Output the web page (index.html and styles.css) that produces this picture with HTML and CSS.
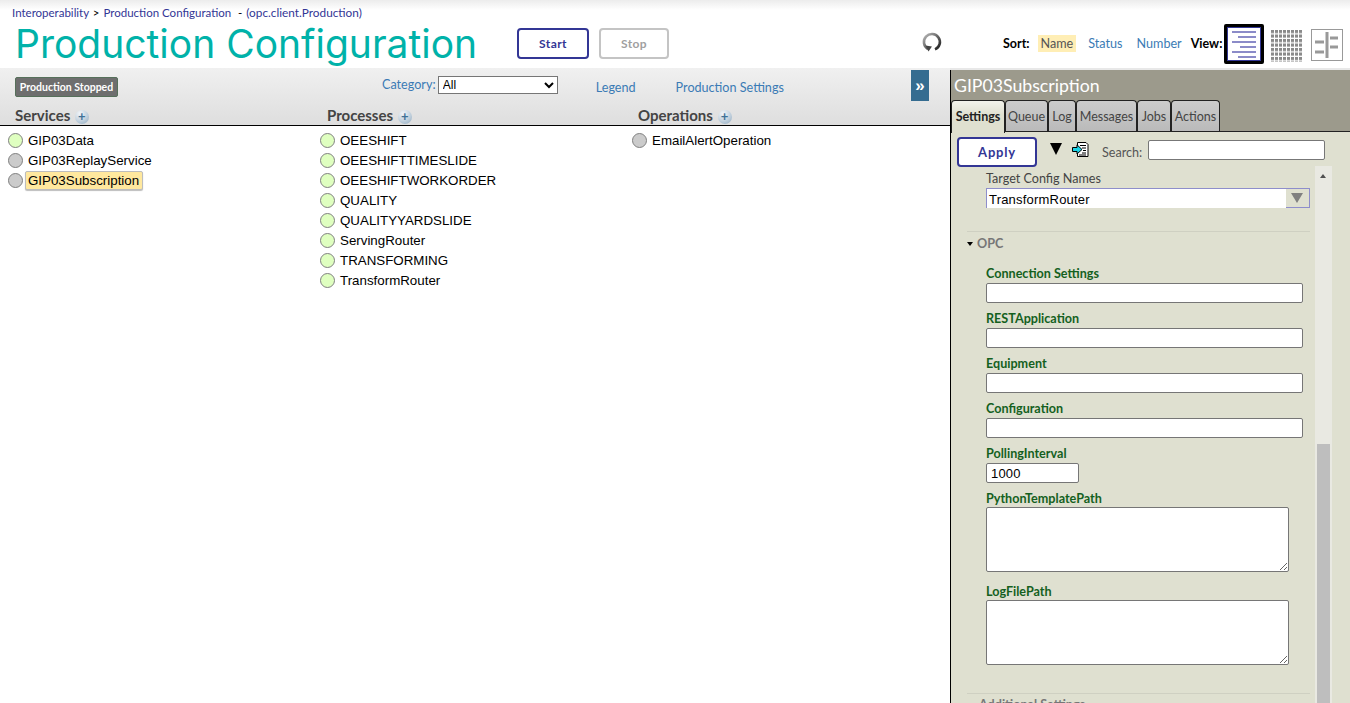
FILE: index.html
```html
<!DOCTYPE html>
<html>
<head>
  <meta charset="utf-8">
  <title>Production Configuration</title>
  <link rel="stylesheet" href="styles.css">
</head>
<body>
  <header class="top">
    <div class="title-block">
      <div class="crumbs"><a>Interoperability</a> <b>&gt;</b> <a>Production Configuration</a> &nbsp;<b>-</b> <a class="crumb-ns">(opc.client.Production)</a></div>
      <h1>Production Configuration</h1>
    </div>
    <div class="run-buttons">
      <button class="btn">Start</button>
      <button class="btn btn-off">Stop</button>
    </div>
    <svg class="refresh" width="22" height="22" viewBox="0 0 22 22">
      <defs>
        <linearGradient id="ring" x1="0" y1="0" x2="1" y2="1">
          <stop offset="0" stop-color="#bbb"/>
          <stop offset="0.5" stop-color="#666"/>
          <stop offset="1" stop-color="#1c1c1c"/>
        </linearGradient>
      </defs>
      <path d="M7 18 A8 8 0 1 1 14 18.400" fill="none" stroke="url(#ring)" stroke-width="2.600"/>
      <path d="M4.500 14.500 L11 15.500 L7.500 20.500 Z" fill="#444"/>
    </svg>
    <div class="sort">
      <span class="sort-label">Sort:</span>
      <a class="sort-on">Name</a>
      <a>Status</a>
      <a>Number</a>
      <span class="sort-label view-label">View:</span>
    </div>
    <div class="views">
      <div class="view view-on">
        <svg width="34" height="34" viewBox="0 0 34 34" stroke="#8b8bc8" stroke-width="2">
          <path d="M5 5H29M11 10H29M5 15H29M13 20H29M5 25H29M11 30H29"/>
        </svg>
      </div>
      <svg class="view-grid" width="32" height="32" viewBox="0 0 32 32">
        <defs>
          <pattern id="dots" width="4" height="4.500" patternUnits="userSpaceOnUse">
            <rect width="3" height="3.200" fill="#8a8a8a"/>
          </pattern>
        </defs>
        <rect width="32" height="32" fill="url(#dots)"/>
      </svg>
      <svg class="view-tree" width="32" height="32" viewBox="0 0 32 32">
        <rect x="0.500" y="0.500" width="31" height="31" fill="#fff" stroke="#999"/>
        <path d="M16 3V29" stroke="#999" stroke-width="3"/>
        <path d="M4 13H13M4 23H13M19 9H27M19 18H27" stroke="#999" stroke-width="3"/>
      </svg>
    </div>
  </header>

  <main class="main">
    <section class="diagram">
      <div class="band">
        <div class="band-tools">
          <span class="status-badge">Production Stopped</span>
          <label class="category">Category:
            <select><option>All</option></select>
          </label>
          <a class="legend">Legend</a>
          <a class="prod-settings">Production Settings</a>
          <button class="collapse">»</button>
        </div>
        <div class="col-heads">
          <div class="col-head">Services <span class="plus">+</span></div>
          <div class="col-head">Processes <span class="plus">+</span></div>
          <div class="col-head">Operations <span class="plus">+</span></div>
        </div>
      </div>
      <div class="columns">
        <ul class="items">
          <li><i class="dot dot-green"></i><span>GIP03Data</span></li>
          <li><i class="dot"></i><span>GIP03ReplayService</span></li>
          <li><i class="dot"></i><span class="selected">GIP03Subscription</span></li>
        </ul>
        <ul class="items">
          <li><i class="dot dot-green"></i><span>OEESHIFT</span></li>
          <li><i class="dot dot-green"></i><span>OEESHIFTTIMESLIDE</span></li>
          <li><i class="dot dot-green"></i><span>OEESHIFTWORKORDER</span></li>
          <li><i class="dot dot-green"></i><span>QUALITY</span></li>
          <li><i class="dot dot-green"></i><span>QUALITYYARDSLIDE</span></li>
          <li><i class="dot dot-green"></i><span>ServingRouter</span></li>
          <li><i class="dot dot-green"></i><span>TRANSFORMING</span></li>
          <li><i class="dot dot-green"></i><span>TransformRouter</span></li>
        </ul>
        <ul class="items">
          <li><i class="dot"></i><span>EmailAlertOperation</span></li>
        </ul>
      </div>
    </section>

    <aside class="pane">
      <div class="pane-title">GIP03Subscription</div>
      <div class="tabs">
        <a class="tab tab-on">Settings</a>
        <a class="tab">Queue</a>
        <a class="tab">Log</a>
        <a class="tab">Messages</a>
        <a class="tab">Jobs</a>
        <a class="tab">Actions</a>
      </div>
      <div class="pane-body">
        <div class="apply-row">
          <button class="btn btn-apply">Apply</button>
          <span class="tri-down"></span>
          <svg class="doc-icon" width="17" height="17" viewBox="0 0 17 17">
            <path d="M5.500 1.500H14L16 3.500V15.500H5.500Z" fill="#fff" stroke="#000"/>
            <path d="M8 4.500H14M10 7H14M11 9.500H14M10 12H14M7 14H14" stroke="#000"/>
            <path d="M0.500 6.500H5V3.800L10 8.500L5 13V10.500H0.500Z" fill="#19d3e6" stroke="#000"/>
          </svg>
          <label class="search"><span>Search:</span> <input type="text"></label>
        </div>
        <div class="settings-wrap">
          <div class="settings">
            <div class="field">
              <div class="field-label plain">Target Config Names</div>
              <div class="combo"><span>TransformRouter</span><i class="combo-btn"></i></div>
            </div>
            <div class="group-head"><i class="caret"></i>OPC</div>
            <div class="field">
              <div class="field-label">Connection Settings</div>
              <input type="text" class="inp">
            </div>
            <div class="field">
              <div class="field-label">RESTApplication</div>
              <input type="text" class="inp">
            </div>
            <div class="field">
              <div class="field-label">Equipment</div>
              <input type="text" class="inp">
            </div>
            <div class="field">
              <div class="field-label">Configuration</div>
              <input type="text" class="inp">
            </div>
            <div class="field">
              <div class="field-label">PollingInterval</div>
              <input type="text" class="inp inp-short" value="1000">
            </div>
            <div class="field field-area">
              <div class="field-label">PythonTemplatePath</div>
              <textarea class="area"></textarea>
            </div>
            <div class="field field-area field-last">
              <div class="field-label">LogFilePath</div>
              <textarea class="area"></textarea>
            </div>
            <div class="group-head group-more">Additional Settings</div>
          </div>
          <div class="scrollbar">
            <span class="scroll-up"></span>
            <div class="scroll-thumb"></div>
          </div>
        </div>
      </div>
    </aside>
  </main>
</body>
</html>
```

FILE: styles.css
```css
html, body {
  margin: 0;
  padding: 0;
  height: 703px;
  overflow: hidden;
}
body {
  font-family: "Lato", "Liberation Sans", sans-serif;
  font-size: 12.6px;
  background: #fff;
}
a {
  color: #3b7bb5;
}

/* top bar */
.top {
  height: 68px;
  display: flex;
  background: linear-gradient(to bottom, #ececec, #ffffff 10px);
}
.title-block {
  width: 517px;
  padding-left: 12px;
  box-sizing: border-box;
}
.crumbs {
  margin-top: 5px;
  font-size: 11.500px;
  line-height: 15px;
  color: #333695;
  white-space: nowrap;
}
.crumbs a {
  color: #333695;
}
.crumbs b {
  font-weight: normal;
  color: #000;
  margin: 0 1px;
}
.crumbs .crumb-ns {
  font-size: 11.800px;
}
h1 {
  margin: 1px 0 0 3px;
  font-family: "Inter", sans-serif;
  font-size: 39px;
  line-height: 46px;
  font-weight: 400;
  color: #00b2a9;
  white-space: nowrap;
}
.run-buttons {
  display: flex;
  gap: 10px;
  padding-top: 28px;
  width: 153px;
  height: 31px;
}
.btn {
  font-family: inherit;
  font-size: 12px;
  font-weight: 700;
  letter-spacing: 0.4px;
  width: 72px;
  height: 31px;
  padding: 0;
  background: #fff;
  color: #333695;
  border: 2px solid #333695;
  border-radius: 4px;
}
.btn-off {
  width: 70px;
  color: #a0a0a0;
  border-color: #c4c4c4;
}
.refresh {
  margin: 31px 0 0 251px;
}
.sort {
  display: flex;
  align-items: center;
  width: 218px;
  height: 17px;
  margin: 35px 0 0 60px;
  white-space: nowrap;
}
.sort a {
  margin-right: 14px;
}
.sort-label {
  font-size: 12.500px;
  font-weight: 700;
  margin-right: 8px;
  color: #000;
}
.sort .sort-on {
  background: #ffeeb5;
  color: #555;
  padding: 0 3px;
  line-height: 17px;
  margin-right: 12px;
}
.view-label {
  margin: 0 0 0 -5px;
}
.views {
  display: flex;
  align-items: flex-start;
  gap: 7px;
  margin: 24px 0 0 3px;
}
.view {
  width: 40px;
  height: 40px;
  box-sizing: border-box;
  border: 3px solid #000;
  border-radius: 2px;
  background: #fff;
  outline: 1px solid #333695;
  outline-offset: -4px;
}
.view svg {
  display: block;
}
.view-grid {
  margin-top: 6px;
}
.view-tree {
  margin: 5px 0 0 1px;
}

/* left side */
.main {
  display: flex;
  height: 635px;
  background: #e8e8e8;
}
.diagram {
  width: 950px;
  background: #fff;
}
.band {
  height: 57px;
  border-bottom: 1px solid #000;
  background: linear-gradient(to bottom, #f0f0f0, #dedede);
}
.band-tools {
  height: 37px;
  display: flex;
  align-items: flex-start;
  padding-left: 15px;
}
.status-badge {
  margin-top: 9px;
  width: 103px;
  height: 20px;
  box-sizing: border-box;
  background: #6e6e6e;
  border: 1px solid #56705a;
  border-radius: 2px;
  color: #fff;
  font-size: 10.500px;
  font-weight: 700;
  line-height: 18px;
  text-align: center;
  white-space: nowrap;
}
.category {
  margin: 9px 0 0 264px;
  color: #3b7bb5;
  white-space: nowrap;
}
.category select {
  width: 120px;
  height: 18px;
  margin: -1px 0 0 -1px;
  padding: 0;
  font-family: "Liberation Sans", sans-serif;
  font-size: 12px;
  background: #fff;
  vertical-align: top;
}
.legend {
  margin: 12px 0 0 38px;
}
.prod-settings {
  margin: 12px 0 0 40px;
}
.collapse {
  margin: 2px 0 0 127px;
  width: 18px;
  height: 31px;
  padding: 0;
  border: 0;
  background: #356c90;
  color: #fff;
  font-size: 17px;
  font-weight: 700;
}
.col-heads {
  display: grid;
  grid-template-columns: 312px 311px 1fr;
  padding-left: 15px;
}
.col-head {
  font-size: 15px;
  font-weight: 700;
  color: #444;
  line-height: 20px;
}
.plus {
  display: inline-block;
  width: 14px;
  height: 14px;
  margin-left: 1px;
  border-radius: 50%;
  background: radial-gradient(circle at 35% 25%, #f2f5f8, #c6d4e0 50%, #8ea9bf);
  color: #3f7197;
  font-size: 13px;
  line-height: 13px;
  text-align: center;
  vertical-align: 0;
}
.columns {
  display: grid;
  grid-template-columns: 312px 312px 1fr;
  padding: 5px 0 0 8px;
}
.items {
  list-style: none;
  margin: -1px 0 0;
  padding: 0;
  font-family: "Liberation Sans", sans-serif;
  font-size: 13.333px;
  color: #000;
}
.items li {
  height: 20px;
  display: flex;
  align-items: center;
  white-space: nowrap;
}
.dot {
  width: 13px;
  height: 13px;
  margin-right: 3px;
  border-radius: 50%;
  border: 1px solid #808080;
  background: #cbcbcb;
  flex: none;
}
.dot-green {
  background: #dfffc0;
}
.items span {
  padding: 0 1px;
  margin-left: 1px;
}
.items .selected {
  padding: 0 3px 0 2px;
  margin-left: -1px;
  background: #ffe89e;
  border: 1px solid #bdbdbd;
  border-radius: 2px;
  box-shadow: 0 1px 1px #bdbdbd;
  line-height: 17px;
}

/* right side */
.pane {
  width: 400px;
  margin-top: 2px;
  box-sizing: border-box;
  border-left: 1px solid #000;
  background: #9c9a8c;
  display: flex;
  flex-direction: column;
}
.pane-title {
  height: 30px;
  padding-left: 3px;
  font-size: 17.700px;
  line-height: 31px;
  color: #fff;
}
.tabs {
  display: flex;
  height: 31px;
}
.tab {
  box-sizing: border-box;
  height: 31px;
  padding-top: 8px;
  background: linear-gradient(to bottom, #cccccc, #bababa);
  color: #444;
  border: 1px solid #222;
  border-bottom: 0;
  border-radius: 4px 4px 0 0;
  font-size: 12.500px;
  text-align: center;
  white-space: nowrap;
}
.tab:nth-child(1) { width: 54px; }
.tab:nth-child(2) { width: 43px; }
.tab:nth-child(3) { width: 28px; }
.tab:nth-child(4) { width: 61px; }
.tab:nth-child(5) { width: 34px; }
.tab:nth-child(6) { width: 49px; }
.tab-on {
  height: 33px;
  background: linear-gradient(to bottom, #f3f3ec, #dfe0d0 14px);
  color: #222;
  font-weight: 700;
  z-index: 1;
}
.pane-body {
  flex: 1;
  min-height: 0;
  background: #dfe0d0;
  border-top: 1px solid #222;
  display: flex;
  flex-direction: column;
}
.apply-row {
  height: 34px;
  box-sizing: border-box;
  display: flex;
  align-items: flex-start;
  padding: 5px 0 0 6px;
}
.btn-apply {
  width: 80px;
  height: 30px;
  font-size: 13px;
  letter-spacing: 0.8px;
}
.tri-down {
  width: 0;
  height: 0;
  margin: 6px 0 0 13px;
  border-left: 6px solid transparent;
  border-right: 6px solid transparent;
  border-top: 12px solid #000;
}
.doc-icon {
  margin: 4px 0 0 10px;
}
.search {
  display: flex;
  align-items: flex-start;
  margin: 3px 0 0 13px;
  color: #555;
  white-space: nowrap;
}
.search span {
  margin-top: 5px;
}
.search input {
  width: 177px;
  height: 20px;
  box-sizing: border-box;
  margin-left: 6px;
  border: 1px solid #777;
  border-radius: 2px;
  background: #fff;
}
.settings-wrap {
  flex: 1;
  min-height: 0;
  display: flex;
  overflow: hidden;
}
.settings {
  width: 343px;
  margin-left: 16px;
  flex: none;
  padding-top: 4px;
}
.field {
  padding-left: 19px;
  margin-bottom: 8px;
}
.field-label {
  font-size: 12.600px;
  font-weight: 700;
  line-height: 15px;
  margin-bottom: 2px;
  color: #14601e;
}
.field-area .field-label {
  margin-bottom: 1px;
}
.field-area {
  margin-bottom: 12px;
}
.field-label.plain {
  font-weight: 400;
  color: #444;
  padding-top: 1px;
  margin-bottom: 2px;
}
.combo {
  width: 324px;
  height: 20px;
  box-sizing: border-box;
  display: flex;
  justify-content: space-between;
  align-items: center;
  padding-left: 2px;
  background: #fff;
  border: 1px solid #8e8ecb;
  border-bottom: 0;
  font-family: "Liberation Sans", sans-serif;
  font-size: 13px;
  letter-spacing: 0.2px;
}
.combo span {
  padding-top: 1px;
}
.combo-btn {
  width: 23px;
  height: 19px;
  background: #dfe0d0;
  border-bottom: 1px solid #8e8ecb;
  box-sizing: border-box;
  position: relative;
}
.combo-btn::after {
  content: "";
  position: absolute;
  left: 5px;
  top: 4px;
  border-left: 6px solid transparent;
  border-right: 6px solid transparent;
  border-top: 10px solid #808080;
}
.group-head {
  margin-top: 23px;
  height: 34px;
  border-top: 1px solid #cfd0c2;
  font-size: 12.600px;
  font-weight: 700;
  line-height: 24px;
  color: #777;
}
.caret {
  display: inline-block;
  width: 0;
  height: 0;
  margin: 0 4px 2px 0;
  border-left: 3.500px solid transparent;
  border-right: 3.500px solid transparent;
  border-top: 4px solid #000;
}
.group-more {
  margin-top: 28px;
  padding-left: 12px;
  line-height: 22px;
}
.inp {
  display: block;
  width: 317px;
  height: 20px;
  box-sizing: border-box;
  margin: 0;
  padding: 0 4px;
  border: 1px solid #767676;
  border-radius: 2px;
  background: #fff;
  font-family: "Liberation Sans", sans-serif;
  font-size: 13px;
  letter-spacing: 0.2px;
}
.inp-short {
  width: 93px;
}
.area {
  display: block;
  width: 303px;
  height: 65px;
  box-sizing: border-box;
  margin: 0;
  border: 1px solid #767676;
  border-radius: 2px;
  background: #fff;
}
.field-last {
  margin-bottom: 0;
}
.scrollbar {
  width: 17px;
  margin-left: 5px;
  flex: none;
  background: #e9e9e2;
  padding: 0 2px;
  box-sizing: border-box;
  position: relative;
}
.scroll-up {
  position: absolute;
  left: 5px;
  top: 8px;
  border-left: 3.500px solid transparent;
  border-right: 3.500px solid transparent;
  border-bottom: 4px solid #505050;
}
.scroll-thumb {
  margin-top: 278px;
  height: 400px;
  background: #bebebe;
}
```
